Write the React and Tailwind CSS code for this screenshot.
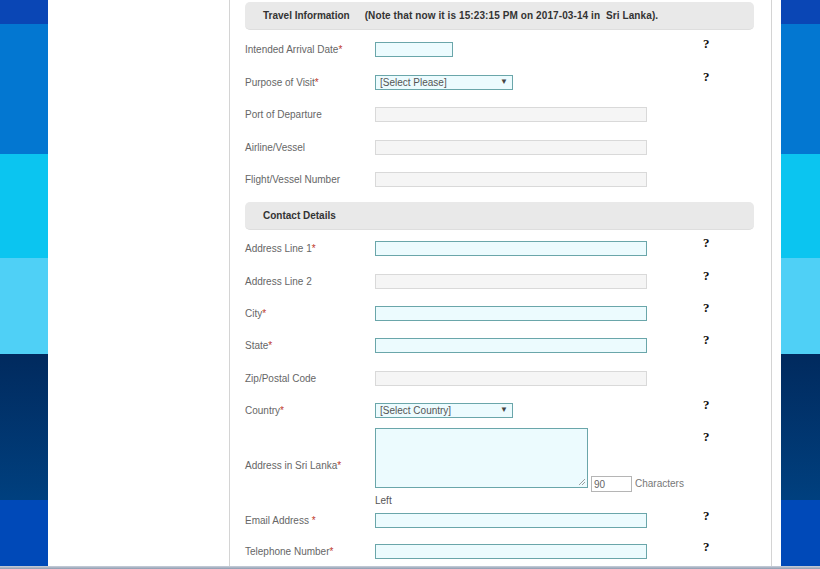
import React from "react";

function Strip() {
  return (
    <div className="flex flex-col h-full w-full">
      <div className="h-[24px] bg-[#0a46b5]" />
      <div className="h-[130px] bg-[#0377d1]" />
      <div className="h-[104px] bg-[#0bc5f0]" />
      <div className="h-[96px] bg-[#4fd0f6]" />
      <div className="h-[146px] bg-gradient-to-b from-[#012a5e] to-[#00407f]" />
      <div className="flex-1 bg-[#0049b8]" />
    </div>
  );
}

function Req({ space }) {
  return <span className="text-[#c0392b]">{space ? "\u00a0*" : "*"}</span>;
}

function Q() {
  return (
    <div className="pt-[4px] text-[13px] leading-[13px] font-bold text-[#111] font-['Liberation_Serif',serif]">
      ?
    </div>
  );
}

function Header({ children }) {
  return (
    <div className="mr-[17px] h-[28px] rounded-[5px] bg-[#e9e9e9] border-b border-[#dedede] flex items-center pl-[18px] text-[10px] font-bold text-[#333]">
      {children}
    </div>
  );
}

function Row({ label, h, q, children, mt }) {
  return (
    <div className={`flex ${h} ${mt || ""}`}>
      <div className="w-[130px] flex items-center text-[10px] text-[#666] whitespace-nowrap">
        <span>{label}</span>
      </div>
      <div className="w-[328px] flex items-center">{children}</div>
      <div>{q ? <Q /> : null}</div>
    </div>
  );
}

const reqInput = "h-[15px] border border-[#6aa6aa] bg-[#ecfbfe]";
const disInput = "h-[15px] w-[272px] border border-[#d9d9d9] bg-[#f5f5f5]";

function Select({ text }) {
  return (
    <div className={`${reqInput} w-[138px] flex items-center justify-between pl-[4px] pr-[4px] text-[10px] text-[#555]`}>
      <span className="leading-[13px]">{text}</span>
      <span className="text-[8px] text-[#444] leading-none">▼</span>
    </div>
  );
}

export default function App() {
  return (
    <div className="w-[820px] h-[569px] overflow-hidden flex flex-col font-['Liberation_Sans',Arial,sans-serif]">
      <div className="flex h-[566px]">
        <div className="w-[48px] h-full">
          <Strip />
        </div>
        <div className="w-[733px] h-full bg-white pl-[181px] pr-[9px]">
          <div className="h-full border-l border-r border-[#d4d4d4] pl-[15px]">
            <div className="pt-[2px]">
              <Header>
                <span>Travel Information</span>
                <span className="ml-[15px] tracking-[0.1px]">(Note that now it is 15:23:15 PM on 2017-03-14 in&nbsp; Sri Lanka).</span>
              </Header>
            </div>
            <Row label={<>Intended Arrival Date<Req /></>} h="h-[33px]" q mt="mt-[3px]">
              <div className={`${reqInput} w-[78px]`} />
            </Row>
            <Row label={<>Purpose of Visit<Req /></>} h="h-[32px]" q>
              <Select text="[Select Please]" />
            </Row>
            <Row label="Port of Departure" h="h-[33px]">
              <div className={disInput} />
            </Row>
            <Row label="Airline/Vessel" h="h-[32px]">
              <div className={disInput} />
            </Row>
            <Row label="Flight/Vessel Number" h="h-[32px]">
              <div className={disInput} />
            </Row>
            <div className="pt-[7px]">
              <Header>Contact Details</Header>
            </div>
            <Row label={<>Address Line 1<Req /></>} h="h-[33px]" q mt="mt-[2px]">
              <div className={`${reqInput} w-[272px]`} />
            </Row>
            <Row label="Address Line 2" h="h-[32px]" q>
              <div className={disInput} />
            </Row>
            <Row label={<>City<Req /></>} h="h-[32px]" q>
              <div className={`${reqInput} w-[272px]`} />
            </Row>
            <Row label={<>State<Req /></>} h="h-[33px]" q>
              <div className={`${reqInput} w-[272px]`} />
            </Row>
            <Row label="Zip/Postal Code" h="h-[32px]">
              <div className={disInput} />
            </Row>
            <Row label={<>Country<Req /></>} h="h-[32px]" q>
              <Select text="[Select Country]" />
            </Row>
            <div className="flex h-[79px]">
              <div className="w-[130px] flex items-center text-[10px] text-[#666] whitespace-nowrap">
                <span>Address in Sri Lanka<Req /></span>
              </div>
              <div className="w-[328px] flex flex-col pt-[2px]">
                <div className="flex items-start">
                  <div className="relative w-[213px] h-[60px] border border-[#6aa6aa] bg-[#ecfbfe]">
                    <svg className="absolute right-[1px] bottom-[1px]" width="8" height="8" viewBox="0 0 8 8">
                      <line x1="7" y1="1" x2="1" y2="7" stroke="#888" strokeWidth="0.8" />
                      <line x1="7" y1="4" x2="4" y2="7" stroke="#888" strokeWidth="0.8" />
                    </svg>
                  </div>
                  <div className="ml-[3px] mt-[48px] w-[41px] h-[16px] border border-[#b5b5b5] bg-white flex items-center pl-[2px] text-[10px] text-[#666]">
                    90
                  </div>
                  <div className="ml-[3px] mt-[50px] text-[10px] text-[#777] leading-[12px]">Characters</div>
                </div>
                <div className="mt-[3px] text-[10px] text-[#555] leading-[12px]">Left</div>
              </div>
              <div>
                <Q />
              </div>
            </div>
            <Row label={<>Email Address<Req space /></>} h="h-[31px]" q>
              <div className={`${reqInput} w-[272px]`} />
            </Row>
            <Row label={<>Telephone Number<Req /></>} h="h-[30px]" q>
              <div className={`${reqInput} w-[272px]`} />
            </Row>
          </div>
        </div>
        <div className="w-[39px] h-full">
          <Strip />
        </div>
      </div>
      <div className="h-[3px] bg-gradient-to-b from-[#c9d0da] to-[#8e9bb0]" />
    </div>
  );
}
